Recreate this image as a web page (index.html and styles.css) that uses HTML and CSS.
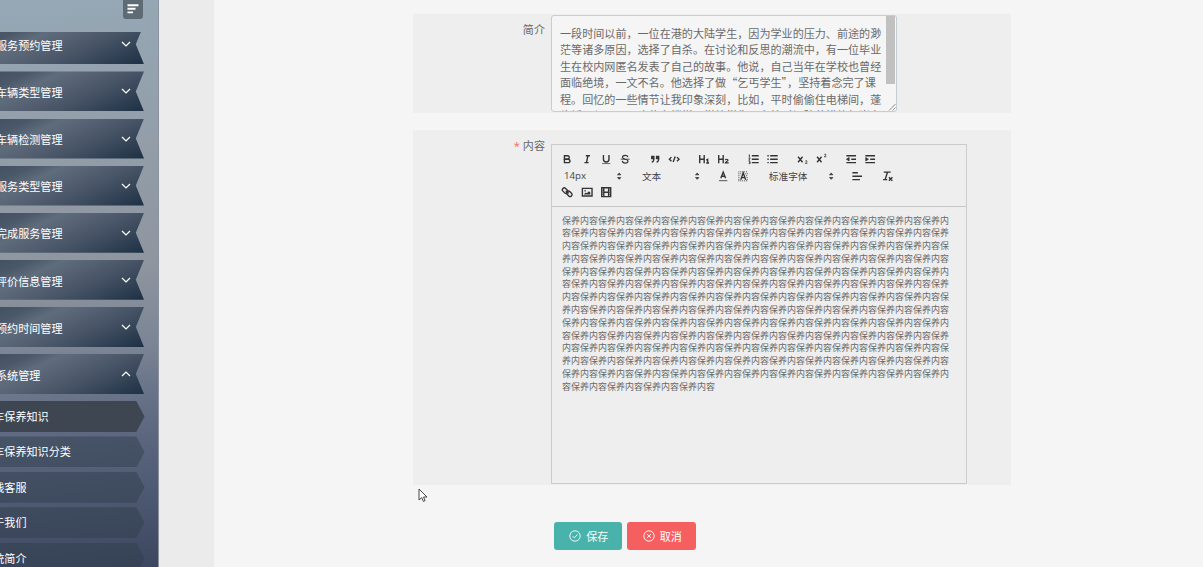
FILE: index.html
```
<!DOCTYPE html>
<html lang="zh-CN">
<head>
    <meta charset="UTF-8">
    <meta name="viewport" content="width=device-width, initial-scale=1.0">
    <title>汽车保养知识</title>
    <link rel="stylesheet" href="styles.css">
</head>
<body>
    <aside class="sidebar">
        <div class="collapse-btn">
            <svg viewBox="0 0 12 10"><path d="M.5 1.2h11M.5 4.8h8M.5 8.4h5.5"/></svg>
        </div>
        <div class="menu-wrap">
            <ul class="menu">
                <li><span>服务预约管理</span><svg class="arrow" viewBox="0 0 10 6"><path d="M1 1l4 4 4-4"/></svg></li>
                <li><span>车辆类型管理</span><svg class="arrow" viewBox="0 0 10 6"><path d="M1 1l4 4 4-4"/></svg></li>
                <li><span>车辆检测管理</span><svg class="arrow" viewBox="0 0 10 6"><path d="M1 1l4 4 4-4"/></svg></li>
                <li><span>服务类型管理</span><svg class="arrow" viewBox="0 0 10 6"><path d="M1 1l4 4 4-4"/></svg></li>
                <li><span>完成服务管理</span><svg class="arrow" viewBox="0 0 10 6"><path d="M1 1l4 4 4-4"/></svg></li>
                <li><span>评价信息管理</span><svg class="arrow" viewBox="0 0 10 6"><path d="M1 1l4 4 4-4"/></svg></li>
                <li><span>预约时间管理</span><svg class="arrow" viewBox="0 0 10 6"><path d="M1 1l4 4 4-4"/></svg></li>
                <li><span>系统管理</span><svg class="arrow" viewBox="0 0 10 6"><path d="M1 5l4-4 4 4"/></svg></li>
            </ul>
            <ul class="submenu">
                <li class="active">汽车保养知识</li>
                <li>汽车保养知识分类</li>
                <li>在线客服</li>
                <li>关于我们</li>
                <li>系统简介</li>
            </ul>
        </div>
    </aside>
    <div class="gutter"></div>

    <main class="content">
        <div class="form-item intro">
            <label>简介</label>
            <div class="textarea">
                <p>一段时间以前，一位在港的大陆学生，因为学业的压力、前途的渺茫等诸多原因，选择了自杀。在讨论和反思的潮流中，有一位毕业生在校内网匿名发表了自己的故事。他说，自己当年在学校也曾经面临绝境，一文不名。他选择了做“乞丐学生”，坚持着念完了课程。回忆的一些情节让我印象深刻，比如，平时偷偷住电梯间，蓬头垢面与民工同吃住在楼梯，学校学生同在校时间防范措施相当有力</p>
                <span class="scroll-thumb"></span>
                <svg class="resizer" viewBox="0 0 8 8"><path d="M1 7.5L7.5 1M4.5 7.5L7.5 4.5"/></svg>
            </div>
        </div>

        <div class="form-item detail">
            <label><em>*</em>内容</label>
            <div class="editor">
                <div class="toolbar">
                    <div class="group">
                        <button><svg viewBox="0 0 18 18"><path d="M5,4H9.5A2.5,2.5,0,0,1,12,6.5v0A2.5,2.5,0,0,1,9.5,9H5V4Z"/><path d="M5,9h5.5A2.5,2.5,0,0,1,13,11.5v0A2.5,2.5,0,0,1,10.5,14H5V9Z"/></svg></button>
                        <button><svg viewBox="0 0 18 18"><path d="M7 4h6M5 14h6M8 14l2-10"/></svg></button>
                        <button><svg viewBox="0 0 18 18"><path d="M5,3V9a4.012,4.012,0,0,0,4,4H9a4.012,4.012,0,0,0,4-4V3"/><rect class="base" x="3" y="15" width="12" height="1"/></svg></button>
                        <button><svg viewBox="0 0 18 18"><path class="thin" d="M15.5 9h-13"/><path class="mid" d="M13 6C12.500 4 10.500 3.500 9 3.500 6 3.500 5 5 5 6.300 5 8 7 8.500 9 9c2.500.5 4 1.300 4 3 0 1.500-1.500 2.700-4 2.700S5 13.500 4.800 11.500"/></svg></button>
                    </div>
                    <div class="group">
                        <button><svg viewBox="0 0 18 18"><g class="fill"><rect x="4" y="5" width="3" height="3"/><rect x="11" y="5" width="3" height="3"/></g><path d="M7 8c0 4-1 5-3 5M14 8c0 4-1 5-3 5"/></svg></button>
                        <button><svg viewBox="0 0 18 18"><path d="M5 6L2 9l3 3M13 6l3 3-3 3M10.500 5L7.500 13"/></svg></button>
                    </div>
                    <div class="group">
                        <button><svg viewBox="0 0 18 18"><path d="M2.500 3v12M9 3v12M2.500 9H9M12 10.300l2-1v5M12 14.500h4"/></svg></button>
                        <button><svg viewBox="0 0 18 18"><path d="M2.500 3v12M9 3v12M2.500 9H9"/><path class="mid" d="M12 10.200c.3-1.500 4-1.600 4 .2 0 1.300-2.800 1.900-3.800 3.900h4.800"/></svg></button>
                    </div>
                    <div class="group">
                        <button><svg viewBox="0 0 18 18"><path d="M7 4h10M7 9h10M7 14h10"/><path class="thin" d="M2.500 3l1-.5V6M2.500 6h2M2.500 8h2l-2 2.500h2M2.500 12.500h2v3h-2M3 14h1.500"/></svg></button>
                        <button><svg viewBox="0 0 18 18"><path d="M6 4h11M6 9h11M6 14h11M2 4h2M2 9h2M2 14h2"/></svg></button>
                    </div>
                    <div class="group">
                        <button><svg viewBox="0 0 18 18"><path d="M3 5.500l6.500 8M9.500 5.500L3 13.500"/><path class="thin" d="M13.500 12c.2-1.300 2.500-1.200 2.500.2 0 1-2 1.600-2.500 2.800h3"/></svg></button>
                        <button><svg viewBox="0 0 18 18"><path d="M3 5.500l6.500 8M9.500 5.500L3 13.500"/><path class="thin" d="M13.500 2.500c.2-1.300 2.500-1.200 2.500.2 0 1-2 1.600-2.500 2.800h3"/></svg></button>
                    </div>
                    <div class="group">
                        <button><svg viewBox="0 0 18 18"><path d="M2 14h14M2 4h14M9 9h7"/><path class="solid" d="M6 6.500v5L2 9z"/></svg></button>
                        <button><svg viewBox="0 0 18 18"><path d="M2 14h14M2 4h14M9 9h7"/><path class="solid" d="M2.500 6.500v5l4-2.500z"/></svg></button>
                    </div>
                    <div class="group">
                        <div class="picker">14px<svg viewBox="0 0 18 18"><path class="solid" d="M6.500 11L9 13.500l2.500-2.500zM6.500 7L9 4.500 11.500 7z"/></svg></div>
                    </div>
                    <div class="group">
                        <div class="picker">文本<svg viewBox="0 0 18 18"><path class="solid" d="M6.500 11L9 13.500l2.500-2.500zM6.500 7L9 4.500 11.500 7z"/></svg></div>
                    </div>
                    <div class="group">
                        <button><svg viewBox="0 0 18 18"><path class="thin" d="M3 15.500h12"/><path d="M5.500 12L9 3l3.500 9M6.500 9h5"/></svg></button>
                        <button><svg viewBox="0 0 18 18"><path class="dots" d="M2 2.700h14M2 5.500h4M12 5.500h4M2 8.300h3M13 8.300h3M2 11.100h2M14 11.100h2M2 13.900h2M14 13.900h2M2 15.700h14"/><path d="M5.500 14L9 4l3.500 10M6.500 11h5"/></svg></button>
                    </div>
                    <div class="group">
                        <div class="picker font">标准字体<svg viewBox="0 0 18 18"><path class="solid" d="M6.500 11L9 13.500l2.500-2.500zM6.500 7L9 4.500 11.500 7z"/></svg></div>
                    </div>
                    <div class="group">
                        <button><svg viewBox="0 0 18 18"><path d="M2 9h14M2 14h11M2 4h8"/></svg></button>
                    </div>
                    <div class="group">
                        <button><svg viewBox="0 0 18 18"><path d="M4 3h10M6 14L9.500 3M3 14h6M11.500 10.500l5 5M16.500 10.500l-5 5"/></svg></button>
                    </div>
                    <div class="group">
                        <button><svg viewBox="0 0 18 18"><rect x="1.500" y="4" width="9" height="5.500" rx="2.700" transform="rotate(45 6 6.750)"/><rect x="7.500" y="8.500" width="9" height="5.500" rx="2.700" transform="rotate(45 12 11.250)"/><path d="M7 7l4 4"/></svg></button>
                        <button><svg viewBox="0 0 18 18"><path d="M2 3.500h14v11H2z"/><circle class="base" cx="6" cy="7" r="1.200"/><path class="base" d="M4.500 12.500V11.500l2.500-2 1.500 1 3-3 2 2v3z"/></svg></button>
                        <button><svg viewBox="0 0 18 18"><path d="M2.500 2.500h13v13h-13zM5.500 3v12M12.500 3v12M5.500 9h7"/><path class="thin" d="M3 6h2.500M3 9h2.500M3 12h2.500M12.500 6H15M12.500 9H15M12.500 12H15"/></svg></button>
                    </div>
                </div>
                <div class="editor-body" id="editorBody"></div>
            </div>
        </div>

        <div class="actions">
            <button class="btn save"><svg viewBox="0 0 12 12"><circle cx="6" cy="6" r="5.2"/><path d="M3.6 6.1l1.8 1.8 3.1-3.5"/></svg>保存</button>
            <button class="btn cancel"><svg viewBox="0 0 12 12"><circle cx="6" cy="6" r="5.2"/><path d="M4 4l4 4M8 4L4 8"/></svg>取消</button>
        </div>
    </main>

    <svg class="cursor" viewBox="0 0 10 15"><path d="M1 1v11l2.700-2.400 1.700 3.800 1.700-.8-1.600-3.600H9z"/></svg>

    <script>
        document.getElementById('editorBody').textContent = '保养内容'.repeat(144);
    </script>
</body>
</html>
```

FILE: styles.css
```
* {
    margin: 0;
    padding: 0;
    box-sizing: border-box;
}

body {
    width: 100%;
    height: 100vh;
    display: flex;
    overflow: hidden;
    background: #f5f5f5;
    color: #6a6a6a;
    font-family: "Open Sans", "Noto Sans CJK SC", sans-serif;
    font-size: 11.08px;
}

ul {
    list-style: none;
}

button {
    border: none;
    background: none;
    font-family: inherit;
}

/* sidebar */
.sidebar {
    width: 158.6px;
    flex: none;
    overflow: hidden;
    background: linear-gradient(174deg, #96a8b6 0%, #929da8 28%, #8e959f 48%, #7a8494 62%, #646e85 72%, #525d76 84%, #3c475f 100%);
    border-right: 1px solid #8b929d;
    color: #fff;
}

.collapse-btn {
    width: 20px;
    height: 19px;
    margin-left: 123px;
    background: #5f6b74;
    border-radius: 0 0 3px 3px;
    display: flex;
    justify-content: center;
    padding-top: 4px;
}

.collapse-btn svg {
    width: 12px;
    height: 10px;
    stroke: #fff;
    stroke-width: 1.9;
}

.menu-wrap {
    height: 535px;
    margin-top: 13px;
    overflow: hidden;
}

.menu {
    margin-top: -7.7px;
}

.menu li {
    width: 144px;
    height: 40px;
    margin-bottom: 7.1px;
    padding-right: 13.5px;
    display: flex;
    align-items: center;
    justify-content: space-between;
    background: linear-gradient(155deg, #435162 0%, #4a5869 14%, #5f6c7c 28%, #556172 44%, #435063 65%, #1d3044 100%);
    clip-path: polygon(0 0, 100% 0, 94.3% 50%, 100% 100%, 0 100%);
}

.menu span {
    margin-left: -4px;
    padding-top: 1.5px;
}

.arrow {
    width: 10px;
    height: 6px;
    fill: none;
    stroke: #fff;
    stroke-width: 1.2;
}

.submenu li {
    width: 144.5px;
    height: 31px;
    margin-bottom: 4.4px;
    line-height: 32px;
    text-indent: -17.8px;
    white-space: nowrap;
    background: rgba(48, 62, 76, .5);
    clip-path: polygon(0 0, 94.3% 0, 100% 50%, 94.3% 100%, 0 100%);
}

.submenu .active {
    background: #3e4652;
}

.gutter {
    width: 55px;
    flex: none;
    background: #ebebeb;
}

/* form */
.content {
    flex: 1;
    padding: 14px 192px 0 199.4px;
}

.form-item {
    display: flex;
    align-items: flex-start;
    background: #eee;
}

.form-item label {
    width: 132px;
    flex: none;
    text-align: right;
}

.form-item em {
    color: #f56c6c;
    font-style: normal;
    margin-right: 3px;
}

.intro {
    height: 99px;
    padding-top: 1px;
    margin-bottom: 17px;
}

.intro label {
    padding-top: 6px;
}

.textarea {
    position: relative;
    width: 346px;
    height: 97px;
    margin-left: 6px;
    padding: 8.5px 0 0 8px;
    overflow: hidden;
    background: #f5f5f5;
    border: 1px solid #c5ced0;
    border-radius: 3px;
    font-family: "Noto Sans CJK SC", sans-serif;
    line-height: 16.6px;
}

.textarea p {
    width: 323px;
    word-break: break-all;
}

.scroll-thumb {
    position: absolute;
    top: 0;
    right: 1px;
    width: 9px;
    height: 68px;
    background: #c1c1c1;
}

.resizer {
    position: absolute;
    right: 0;
    bottom: 0;
    width: 8px;
    height: 8px;
    stroke: #777;
    stroke-width: .8;
}

.detail {
    height: 355px;
    padding-top: 14px;
}

.detail label {
    line-height: 3px;
}

.editor {
    width: 416px;
    height: 340px;
    margin-left: 6px;
    display: flex;
    flex-direction: column;
    border: 1px solid #ccc;
}

.toolbar {
    height: 62px;
    padding: 6px;
    display: flex;
    flex-wrap: wrap;
    align-content: flex-start;
    border-bottom: 1px solid #c4c4c4;
}

.group {
    height: 16.6px;
    display: flex;
    margin-right: 10.35px;
}

.group button {
    width: 19.32px;
    height: 16.6px;
    display: flex;
    align-items: center;
    justify-content: center;
}

.toolbar svg {
    width: 12.42px;
    height: 12.42px;
    fill: none;
    stroke: #333;
    stroke-width: 2;
}

.toolbar .thin {
    stroke-width: 1.2;
}

.toolbar .mid {
    stroke-width: 1.7;
}

.toolbar .fill {
    fill: #333;
}

.toolbar .base {
    fill: #333;
    stroke: none;
}

.toolbar .solid {
    fill: #333;
    stroke-width: 1;
}

.toolbar .dots {
    stroke-width: 1.3;
    stroke-dasharray: 1.4 1.4;
}

.picker {
    width: 67.6px;
    height: 16.6px;
    padding-left: 6px;
    display: flex;
    align-items: center;
    justify-content: space-between;
    color: #444;
    font-size: 9.66px;
}

.picker.font {
    width: 74.5px;
}

.editor-body {
    padding: 7.5px 10px;
    font-size: 9px;
    line-height: 12.78px;
    word-break: break-all;
}

/* buttons */
.actions {
    display: flex;
    gap: 5px;
    margin: 37px 0 0 141px;
}

.btn {
    width: 68.5px;
    height: 28px;
    display: flex;
    align-items: center;
    justify-content: center;
    gap: 5px;
    padding-left: 1px;
    border-radius: 3px;
    color: #fff;
    font-size: 11.08px;
}

.btn svg {
    width: 12px;
    height: 12px;
    fill: none;
    stroke: #fff;
    stroke-width: .9;
}

.save {
    background: #48b2ab;
}

.cancel {
    background: #f65f60;
}

.cursor {
    position: absolute;
    left: 418px;
    top: 488px;
    width: 10px;
    height: 15px;
    fill: #fff;
    stroke: #333;
    stroke-width: .9;
}
```
